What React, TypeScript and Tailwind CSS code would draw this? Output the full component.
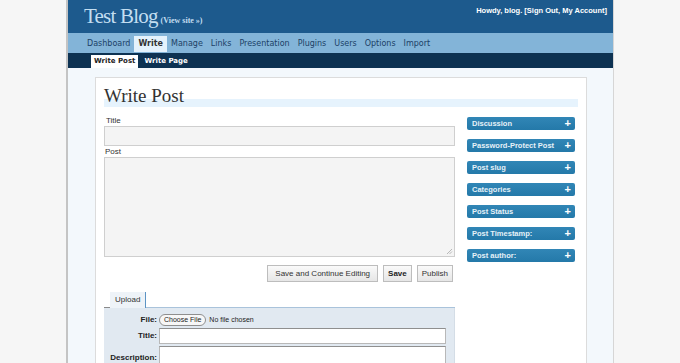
const NAV = ['Dashboard', 'Write', 'Manage', 'Links', 'Presentation', 'Plugins', 'Users', 'Options', 'Import'];

const PANELS = [
  'Discussion',
  'Password-Protect Post',
  'Post slug',
  'Categories',
  'Post Status',
  'Post Timestamp:',
  'Post author:',
];

export default function App() {
  return (
    <div className="flex h-[363px] w-[680px] overflow-hidden bg-[#f6f6f6] font-['Liberation_Sans',Arial,sans-serif]">
      <div className="ml-[66px] flex w-[548px] shrink-0 flex-col border-l-2 border-r border-l-[#c4c4c4] border-r-[#d6d6d6] bg-[#f3f8fc]">
        {/* header */}
        <div className="flex h-[33px] shrink-0 justify-between bg-[#1d5a8d] pl-[16px] pr-[6px]">
          <div className="flex items-baseline gap-[3px] pt-[4px]">
            <span className="font-['Liberation_Serif',serif] text-[21px] leading-[24px] tracking-[-0.8px] text-[#c3def1]">
              Test Blog
            </span>
            <span className="font-['Liberation_Serif',serif] text-[8px] font-bold text-[#c3def1]">(View site »)</span>
          </div>
          <div className="pt-[6px] text-[7.5px] font-bold leading-[10px] text-white">
            Howdy, blog. [Sign Out, My Account]
          </div>
        </div>

        {/* main nav */}
        <div className="flex h-[20px] shrink-0 items-end bg-[#83b4d8] pb-[1px] pl-[15px]">
          {NAV.map((n) => (
            <span
              key={n}
              className={`flex h-[16px] items-center px-[4px] font-['DejaVu_Sans',sans-serif] text-[8px] ${
                n === 'Write' ? 'bg-[#e4f2fc] font-bold text-[#333]' : 'text-[#1b4166]'
              }`}
            >
              {n}
            </span>
          ))}
        </div>

        {/* sub nav */}
        <div className="flex h-[15px] shrink-0 items-end gap-[3px] bg-[#0d3252] pl-[23px]">
          <span className="flex h-[13px] items-center bg-white px-[3px] font-['DejaVu_Sans',sans-serif] text-[7px] font-bold text-[#222]">
            Write Post
          </span>
          <span className="flex h-[13px] items-center px-[3px] font-['DejaVu_Sans',sans-serif] text-[7px] font-bold text-white">
            Write Page
          </span>
        </div>

        {/* body */}
        <div className="flex-1 pl-[27px] pr-[26px] pt-[9px]">
          <div className="h-full border border-[#dcdcdc] bg-white px-[8px]">
            <h2 className="mt-[15px] border-b-[8px] border-[#e6f3fd] font-['Liberation_Serif',serif] text-[19px] leading-[6px] text-[#333]">
              Write Post
            </h2>

            <div className="flex gap-[12px] pt-[9px]">
              {/* left column */}
              <div className="w-[351px]">
                <div className="pl-[2px] text-[8px] leading-[10px] text-[#333]">Title</div>
                <div className="h-[20px] border border-[#cfcfcf] bg-[#f4f4f4]" />
                <div className="mt-[1px] pl-[1px] text-[8px] leading-[10px] text-[#333]">Post</div>
                <div className="relative h-[100px] border border-[#cfcfcf] bg-[#f4f4f4]">
                  <svg className="absolute bottom-[1px] right-[1px]" width="7" height="7" viewBox="0 0 7 7">
                    <path d="M6 1 L1 6 M6 3.5 L3.5 6" stroke="#a8a8a8" strokeWidth="0.8" />
                  </svg>
                </div>

                <div className="mt-[8px] flex justify-end gap-[5px] pr-[2px]">
                  <button className="h-[17px] border border-[#bdbdbd] bg-[linear-gradient(#fafafa,#e6e6e6)] px-[7px] text-[8px] text-[#333]">
                    Save and Continue Editing
                  </button>
                  <button className="h-[17px] border border-[#bdbdbd] bg-[linear-gradient(#fafafa,#e6e6e6)] px-[4px] text-[8px] font-bold text-[#222]">
                    Save
                  </button>
                  <button className="h-[17px] border border-[#bdbdbd] bg-[linear-gradient(#fafafa,#e6e6e6)] px-[4px] text-[8px] text-[#333]">
                    Publish
                  </button>
                </div>

                {/* upload */}
                <div className="mt-[10px]">
                  <div className="flex items-end">
                    <div className="h-[1px] w-[6px] bg-[#8a8a8a]" />
                    <div className="flex h-[16px] items-center border-r border-[#5d94c4] bg-[#eef3f8] px-[5px] text-[8px] text-[#333]">
                      Upload
                    </div>
                    <div className="h-[1px] flex-1 bg-[#a9c3db]" />
                  </div>
                  <div className="border-r border-[#d4dde6] bg-[#e1e9f1] pb-[10px] pr-[8px] pt-[6px]">
                    <div className="flex items-center">
                      <div className="w-[55px] pr-[2px] text-right text-[8px] font-bold text-[#222]">File:</div>
                      <span className="rounded-full border border-[#8f8f8f] bg-[#f7f7f7] px-[4px] text-[7px] leading-[10px] text-[#222]">
                        Choose File
                      </span>
                      <span className="ml-[3px] text-[7px] text-[#222]">No file chosen</span>
                    </div>
                    <div className="mt-[2px] flex items-center">
                      <div className="w-[55px] pr-[2px] text-right text-[8px] font-bold text-[#222]">Title:</div>
                      <div className="h-[16px] flex-1 border border-[#b8b8b8] border-t-[#8f8f8f] bg-white" />
                    </div>
                    <div className="mt-[2px] flex items-start">
                      <div className="w-[55px] pr-[2px] pt-[6px] text-right text-[8px] font-bold text-[#222]">Description:</div>
                      <div className="h-[40px] flex-1 border border-[#b8b8b8] border-t-[#8f8f8f] bg-white" />
                    </div>
                  </div>
                </div>
              </div>

              {/* sidebar */}
              <div className="mt-[1px] flex w-[108px] flex-col gap-[9px]">
                {PANELS.map((p) => (
                  <div
                    key={p}
                    className="flex h-[13px] items-center justify-between rounded-[2px] bg-[linear-gradient(#3186b6,#2479a9)] pl-[5px] pr-[4px] text-[7.5px] font-bold text-[#e6f1f8]"
                  >
                    <span>{p}</span>
                    <span className="text-[11px] leading-none text-white">+</span>
                  </div>
                ))}
              </div>
            </div>
          </div>
        </div>
      </div>
    </div>
  );
}
